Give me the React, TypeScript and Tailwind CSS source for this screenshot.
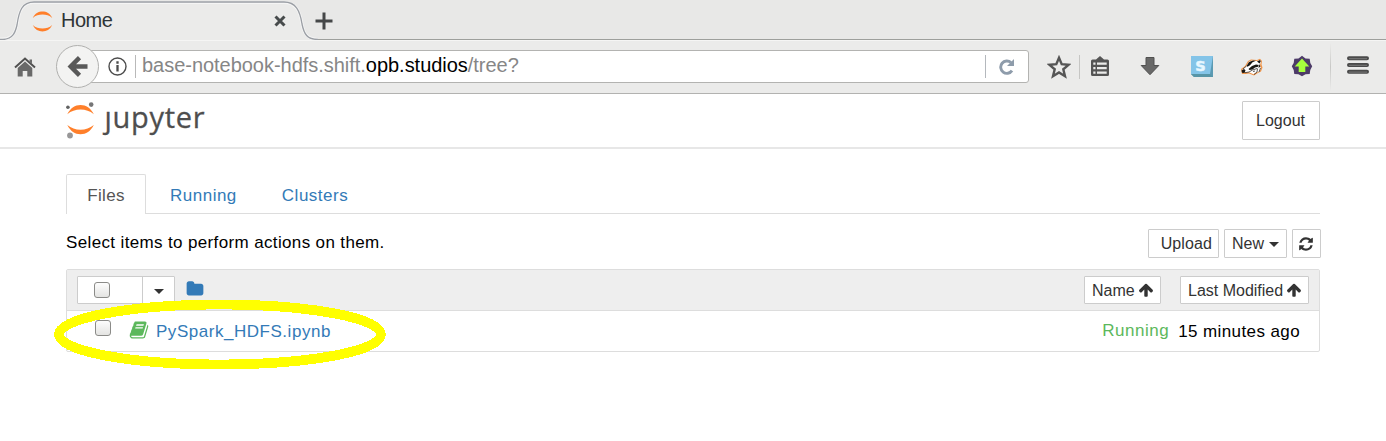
import type { ReactNode } from "react";

const FA = {
  refresh:
    "M1639 1056q0 5-1 7-64 268-268 434.5t-478 166.5q-146 0-282.5-55t-243.5-157l-129 129q-19 19-45 19t-45-19-19-45v-448q0-26 19-45t45-19h448q26 0 45 19t19 45-19 45l-137 137q71 66 161 102t187 36q134 0 250-65t186-179q11-17 53-117 8-23 30-23h192q13 0 22.5 9.5t9.5 22.5zm25-800v448q0 26-19 45t-45 19h-448q-26 0-45-19t-19-45 19-45l138-138q-148-137-349-137-134 0-250 65t-186 179q-11 17-53 117-8 23-30 23h-199q-13 0-22.5-9.5t-9.5-22.5v-7q65-268 270-434.5t480-166.5q146 0 284 55.5t245 156.5l130-129q19-19 45-19t45 19 19 45z",
  arrowUp:
    "M1675 971q0 51-37 90l-75 75q-38 38-91 38-54 0-90-38l-294-293v704q0 52-37.5 84.5t-90.5 32.5h-128q-53 0-90.5-32.5t-37.5-84.5v-704l-294 293q-36 38-90 38t-90-38l-75-75q-38-38-38-90 0-53 38-91l651-651q35-37 90-37 54 0 91 37l651 651q37 39 37 91z",
  book:
    "M1703 478q40 57 18 129l-275 906q-19 64-76.5 107.5t-122.5 43.5h-923q-77 0-148.5-53.5t-99.5-131.5q-24-67-2-127 0-4 3-27t4-37q1-8-3-21.5t-3-19.5q2-11 8-21t16.5-23.5 16.5-23.5q23-38 45-91.5t30-91.5q3-10 .5-30t-.5-28q3-11 17-28t17-23q21-36 42-92t25-90q1-9-2.5-32t.5-28q4-13 22-30.5t22-22.5q19-26 42.5-84.5t27.5-96.5q1-8-3-25.5t-2-26.5q2-8 9-18t18-23 17-21q8-12 16.5-30.5t15-35 16-36 19.5-32 26.5-23.5 36-11.5 47.5 5.5l-1 3q38-9 51-9h761q74 0 114 56t18 130l-274 906q-36 119-71.5 153.5t-128.5 34.5h-869q-27 0-38 15-11 16-1 43 24 70 144 70h923q29 0 56-15.5t35-41.5l300-987q7-22 5-57 38 15 59 43zm-1064 2q-4 13 2 22.5t20 9.5h608q13 0 25.5-9.5t16.5-22.5l21-64q4-13-2-22.5t-20-9.5h-608q-13 0-25.5 9.5t-16.5 22.5zm-83 256q-4 13 2 22.5t20 9.5h608q13 0 25.5-9.5t16.5-22.5l21-64q4-13-2-22.5t-20-9.5h-608q-13 0-25.5 9.5t-16.5 22.5z",
  folder:
    "M1728 608v704q0 92-66 158t-158 66h-1216q-92 0-158-66t-66-158v-960q0-92 66-158t158-66h320q92 0 158 66t66 158v32h672q92 0 158 66t66 158z",
};

function Fa({ d, className }: { d: string; className: string }) {
  return (
    <svg viewBox="0 0 1792 1792" fill="currentColor" className={`shrink-0 ${className}`}>
      <path d={d} />
    </svg>
  );
}

function Caret({ className = "" }: { className?: string }) {
  return (
    <svg viewBox="0 0 10 5" fill="#333" className={`h-[5px] w-2.5 shrink-0 ${className}`}>
      <path d="M0 0h10L5 5z" />
    </svg>
  );
}

function Checkbox({ className = "" }: { className?: string }) {
  return (
    <span
      className={`block size-4 shrink-0 rounded-[3px] border border-[#8b8b88] bg-linear-to-b from-[#fdfdfd] to-[#e4e4e2] ${className}`}
    />
  );
}

function Button({ className, children }: { className: string; children: ReactNode }) {
  return (
    <button
      className={`flex shrink-0 items-center rounded-[1px] border border-[#ccc] bg-white text-base whitespace-nowrap text-[#333] ${className}`}
    >
      {children}
    </button>
  );
}

function BrowserTabs() {
  return (
    <div className="flex h-10 bg-[#e8e8e7]">
      <div className="relative h-10 w-[318px] shrink-0">
        <svg viewBox="0 0 318 40" className="absolute inset-0 h-10 w-[318px]" fill="none">
          <path
            d="M0 39.5H3C12 39 15 34 17 25C19 11 22 2.5 34 2.5H284C296 2.5 300 11 302 24C304 34 307 39.5 318 39.5V40H0Z"
            fill="#ebebea"
          />
          <path
            d="M0 39H3C12 38.500 15 34 17 25C19 11 22 2.500 34 2.500H284C296 2.500 300 11 302 24C304 34 307 39 318 39.500"
            stroke="#fafafa"
            strokeWidth="3"
            opacity=".7"
          />
          <path
            d="M0 39.5H3C12 39 15 34 17 25C19 11 22 2 34 2H284C296 2 300 11 302 24C304 34 307 39.5 318 39.5"
            stroke="#9b9fa5"
            strokeWidth="1.3"
          />
        </svg>
        <div className="relative flex h-10 items-center pl-8">
          <svg viewBox="0 0 21 21" className="mt-0.5 size-[21px] shrink-0" fill="#ff7f2a">
            <path d="M.8 7C3 2.400 6.500.6 10.500.6S18 2.400 20.200 7C17.500 4.400 14 3.500 10.500 3.500S3.500 4.400 .8 7z" />
            <path d="M.8 14C3 18.600 6.500 20.400 10.500 20.400S18 18.600 20.200 14C17.500 16.600 14 17.500 10.500 17.500S3.500 16.600.8 14z" />
          </svg>
          <span className="ml-2 w-[213px] text-[20px] leading-10 tracking-[-0.5px] text-[#2e3436]">Home</span>
          <svg viewBox="0 0 12 12" className="mt-0.5 size-3 shrink-0" stroke="#474b4c" strokeWidth="3">
            <path d="M1.500 1.500l9 9M10.500 1.500l-9 9" />
          </svg>
        </div>
      </div>
      <div className="flex-1 border-b border-[#9d9f9c]">
        <svg viewBox="0 0 18 18" className="mt-3 -ml-[3px] size-[18px]" stroke="#454748" strokeWidth="3">
          <path d="M9 .5v17M.5 9h17" />
        </svg>
      </div>
    </div>
  );
}

function Toolbar() {
  return (
    <div className="flex h-[54px] items-center border-b border-[#b2b2b0] bg-[#ebebea] shadow-[inset_0_1px_0_#f5f5f4]">
      <svg viewBox="0 0 22 20" className="ml-[14px] h-5 w-[22px] shrink-0" fill="#696969">
        <path d="M1 10.500L11 1.500l10 9" fill="none" stroke="#515151" strokeWidth="2" />
        <path d="M15.500 2.500h2.500v4l-2.500-2z" />
        <path d="M3.700 11L11 4.500l7.300 6.500v8.500h-5v-5.500H8.700v5.500h-5z" />
      </svg>
      <div className="z-10 ml-5 flex size-[43px] shrink-0 items-center justify-center rounded-full border border-[#b0b0ae] bg-[#f3f3f2]">
        <svg viewBox="0 0 21 21" className="size-[21px]" stroke="#595959" strokeWidth="4.500" fill="none">
          <path d="M12.500 1.700L3.700 10.500l8.800 8.800M4 10.500h16.500" />
        </svg>
      </div>
      <div className="-ml-2 flex h-[33px] w-[938px] shrink-0 items-center rounded-r-[3px] border border-[#b3b3b1] bg-white pl-4">
        <svg viewBox="0 0 19 19" className="size-[19px] shrink-0" fill="none" stroke="#4c4c4c">
          <circle cx="9.500" cy="9.500" r="8.500" strokeWidth="1.400" />
          <path d="M9.500 8v6.500M9.500 4.300v2.400" strokeWidth="2.300" />
        </svg>
        <span className="ml-2 h-[23px] w-px bg-[#b9b9b9]" />
        <span className="-mt-1 ml-1.5 flex-1 text-[20px] whitespace-nowrap tracking-[-0.03px] text-[#868686]">
          base-notebook-hdfs.shift.<span className="text-black">opb.studios</span>/tree?
        </span>
        <span className="h-[23px] w-px bg-[#b4b8bd]" />
        <svg viewBox="0 0 16 17" className="mr-[13px] ml-[13px] h-[17px] w-4" fill="none" stroke="#8e9cab" strokeWidth="2.900">
          <path d="M13 12.700A6.200 6.200 0 1 1 12 4.500" />
          <path d="M15 1v7H8z" fill="#8e9cab" stroke="none" />
        </svg>
      </div>
      <svg viewBox="0 0 24 24" className="ml-[17.500px] size-6 shrink-0" fill="none" stroke="#555" strokeWidth="2.400">
        <path d="M12 2.800l2.700 6.400 6.900.6-5.300 4.500 1.700 6.900-6-3.700-6 3.700 1.700-6.900L2.400 9.800l6.900-.6z" />
      </svg>
      <span className="ml-[8.500px] h-6 w-px shrink-0 bg-[#c6c6c4]" />
      <svg viewBox="0 0 20 22" className="mb-0.5 ml-[10px] h-[22px] w-5 shrink-0">
        <path d="M2.500 4.500h3.500L10 1l4 3.500h3.500q1.500 0 1.500 1.500v13.500q0 1.500-1.500 1.500h-15Q1 21 1 19.500V6q0-1.500 1.500-1.500z" fill="#555" />
        <path d="M3.300 7.500h2.200v2.200H3.300zM7 7.500h9.700v2.200H7zM3.300 12h2.200v2.200H3.300zM7 12h9.700v2.200H7zM3.300 16.500h2.200v2.200H3.300zM7 16.500h9.700v2.200H7z" fill="#ebebea" />
      </svg>
      <svg viewBox="0 0 20 20" className="mb-0.5 ml-[30px] size-5 shrink-0" fill="#686868" stroke="#505050">
        <path d="M6 1.500h8v8h4.800L10 18.700 1.200 9.500H6z" />
      </svg>
      <svg viewBox="0 0 22 21" className="mb-px ml-[31px] h-[21px] w-[22px] shrink-0">
        <path d="M0 0h22v21H3L0 18z" fill="#5b9ab3" />
        <path d="M0 0h22l-3 18H0z" fill="#84c4e8" />
        <path d="M0 18h19l3 3H3z" fill="#5795a7" />
        <text
          x="9.500"
          y="14.500"
          textAnchor="middle"
          fontFamily="DejaVu Sans"
          fontSize="14.500"
          fontWeight="700"
          fill="#e8f7ff"
          stroke="#e8f7ff"
          strokeWidth=".5"
        >
          S
        </text>
      </svg>
      <svg viewBox="0 0 23 18" className="ml-[27px] h-[18px] w-[23px] shrink-0">
        <path d="M1 11L5 8l3-5 3-1.500 6 .5 3-1.300 2 2.300-.5 3.500 1 3-1.500 4-3.500 1.800L14 17.500 9 15.500l-3 .5H2z" fill="#f0954a" />
        <path d="M2.500 11.500L6 8.500l3-5 3-1 5 .5 3-1 1 1.500-1 3.500 1 3.500-1.500 3-4 1.500-2 1.200-4.500-2-3 .3-3-.5z" fill="#fff" />
        <path
          d="M1.500 12.500L4 11l1.500 1.300L4.500 15 2 14.800zM6.500 8L9 4l4-1.500 3 .3-3.500 1.500-2.500 3-2.500 1.500zM8.500 11l3.500-3 4-1.500 2.500.5-.5 1.800-3 .7-2.500 2-3 .5zM17 3.500l3-1.500.8 1.300-1.300 2.200zM19 6l1.500 2.500-2 1.500z"
          fill="#191713"
        />
        <path d="M5 14.700l4-.7 3.500-2 4.500-1.500M17.500 10.500l-.5 3.500-3 2.500M13 13.500l2-.5M20.500 10l-1.500 4M3 11L6.500 8" fill="none" stroke="#36322f" strokeWidth=".8" />
      </svg>
      <svg viewBox="0 0 22 22" className="mb-0.5 ml-[28px] size-[22px] shrink-0">
        <path d="M11 .8l3.500 2.600 4.200.4.600 4.200 1.900 3.200-1.900 3.700-.6 4-4.200.4L11 21.200l-3.500-1.900-4.200-.4-.6-4L.8 11.200 2.700 8l.6-4.200 4.200-.4z" fill="#4d3b68" />
        <path d="M11 3.500l7.300 8H14.300v5.600H7.700v-5.600h-4z" fill="#a7ff3d" />
      </svg>
      <span className="ml-[17px] h-12 w-px shrink-0 bg-linear-to-b from-transparent via-[#c8c8c6] to-transparent" />
      <svg viewBox="0 0 22 18" className="mb-[3px] ml-4 h-[18px] w-[22px] shrink-0">
        <path d="M2 2.200h18M2 9h18M2 15.800h18" stroke="#4a4a4a" strokeWidth="4" strokeLinecap="round" />
        <path d="M2 2.600h18M2 9.400h18M2 16.200h18" stroke="#707070" strokeWidth="1.200" />
      </svg>
    </div>
  );
}

function JupyterLogo() {
  return (
    <div className="flex h-[38px] items-start">
      <svg viewBox="0 0 30 38" className="h-[38px] w-[30px] shrink-0">
        <g fill="#ff7f2a">
          <path d="M1.300 13.200C4.500 7 9 4 14.500 4s10.200 3 13.300 9.200C24 10 19.500 8.500 14.500 8.500S5.200 10 1.300 13.200z" />
          <path d="M1.300 24C4.500 30.200 9 33.200 14.500 33.200s10.200-3 13.300-9.200C24 27.200 19.500 28.700 14.500 28.700S5.200 27.200 1.300 24z" />
        </g>
        <circle cx="1.900" cy="6.300" r="1.800" fill="#616262" />
        <circle cx="25.200" cy="3.600" r="2.300" fill="#767677" />
        <circle cx="4" cy="34.500" r="2.900" fill="#989798" />
      </svg>
      <span className="ml-[8.500px] font-['Open_Sans','Noto_Sans',sans-serif] text-[29px] leading-[32px] tracking-[0.7px] text-[#4e4e4e] [-webkit-text-stroke:0.3px_#4e4e4e]">
        ȷupyter
      </span>
    </div>
  );
}

function Notebook() {
  return (
    <>
      <header className="flex h-[55px] items-start justify-between border-b-2 border-[#e7e7e7] pt-[7px] pr-[66px] pl-[66px]">
        <JupyterLogo />
        <Button className="h-[39px] w-[78px] justify-center pr-px">Logout</Button>
      </header>
      <main className="mx-[66px] pt-[25px] text-[17px] tracking-[0.36px] text-black">
        <nav className="flex h-10 border-b border-[#ddd] text-[#337ab7]">
          <a className="flex h-10 w-20 items-center justify-center rounded-t-[2px] border border-b-0 border-[#ddd] bg-white pt-0.5 text-[#555]">
            Files
          </a>
          <a className="ml-6 flex items-center pt-1 tracking-[0.5px]">Running</a>
          <a className="ml-[45px] flex items-center pt-1 tracking-[0.5px]">Clusters</a>
        </nav>
        <div className="-mr-px flex h-[55px] items-start pt-[15px]">
          <p className="flex-1 leading-[27px]">Select items to perform actions on them.</p>
          <div className="flex gap-[5px] tracking-normal">
            <Button className="h-[29px] w-[71px] justify-end pr-1.5 tracking-[0.1px]">Upload</Button>
            <Button className="h-[29px] w-[63px] pl-[7px]">
              New
              <Caret className="mt-0.5 ml-[5px]" />
            </Button>
            <Button className="h-[29px] w-[29px] justify-center pr-px">
              <Fa d={FA.refresh} className="size-4" />
            </Button>
          </div>
        </div>
        <section className="h-[83px] rounded-[2px] border border-[#ddd]">
          <div className="flex h-[41px] items-start border-b border-[#ddd] bg-[#eee] pt-1.5 pl-2.5 tracking-normal">
            <div className="flex h-7 w-[98px] rounded-[1px] border border-[#ccc] bg-white">
              <span className="flex w-[65px] items-center border-r border-[#ccc] pl-4">
                <Checkbox />
              </span>
              <span className="flex flex-1 items-center justify-center pt-[3px]">
                <Caret />
              </span>
            </div>
            <Fa d={FA.folder} className="mt-1 ml-[11px] size-[18px] text-[#337ab7]" />
            <div className="ml-auto flex gap-[19px] pr-2.5">
              <Button className="h-7 w-[77px] pl-[7px] leading-none">
                <span className="pt-0.5">Name</span>
                <Fa d={FA.arrowUp} className="ml-[3px] size-4" />
              </Button>
              <Button className="h-7 w-[129px] pl-[7px] leading-none">
                <span className="pt-0.5">Last Modified</span>
                <Fa d={FA.arrowUp} className="ml-[3px] size-4" />
              </Button>
            </div>
          </div>
          <div className="flex h-10 items-center pr-[19px] pl-7">
            <Checkbox className="-mt-1.5" />
            <Fa d={FA.book} className="-mt-[3px] ml-[18px] size-5 text-[#5cb85c]" />
            <a className="mt-px ml-[7px] tracking-[0.53px] text-[#337ab7]">PySpark_HDFS.ipynb</a>
            <span className="-mt-px ml-auto tracking-[0.5px] text-[#5cb85c]">Running</span>
            <span className="mt-px ml-[9px] tracking-[0.4px]">15 minutes ago</span>
          </div>
        </section>
      </main>
    </>
  );
}

export default function App() {
  return (
    <div className="relative h-[441px] w-[1386px] overflow-hidden bg-white font-['Liberation_Sans',Arial,sans-serif]">
      <BrowserTabs />
      <Toolbar />
      <Notebook />
      <svg viewBox="0 0 332 70" className="pointer-events-none absolute top-[300px] left-[54px] h-[70px] w-[332px]">
        <ellipse cx="166" cy="34.500" rx="161" ry="30" fill="none" stroke="#ff0" strokeWidth="9.800" shapeRendering="crispEdges" />
      </svg>
    </div>
  );
}
